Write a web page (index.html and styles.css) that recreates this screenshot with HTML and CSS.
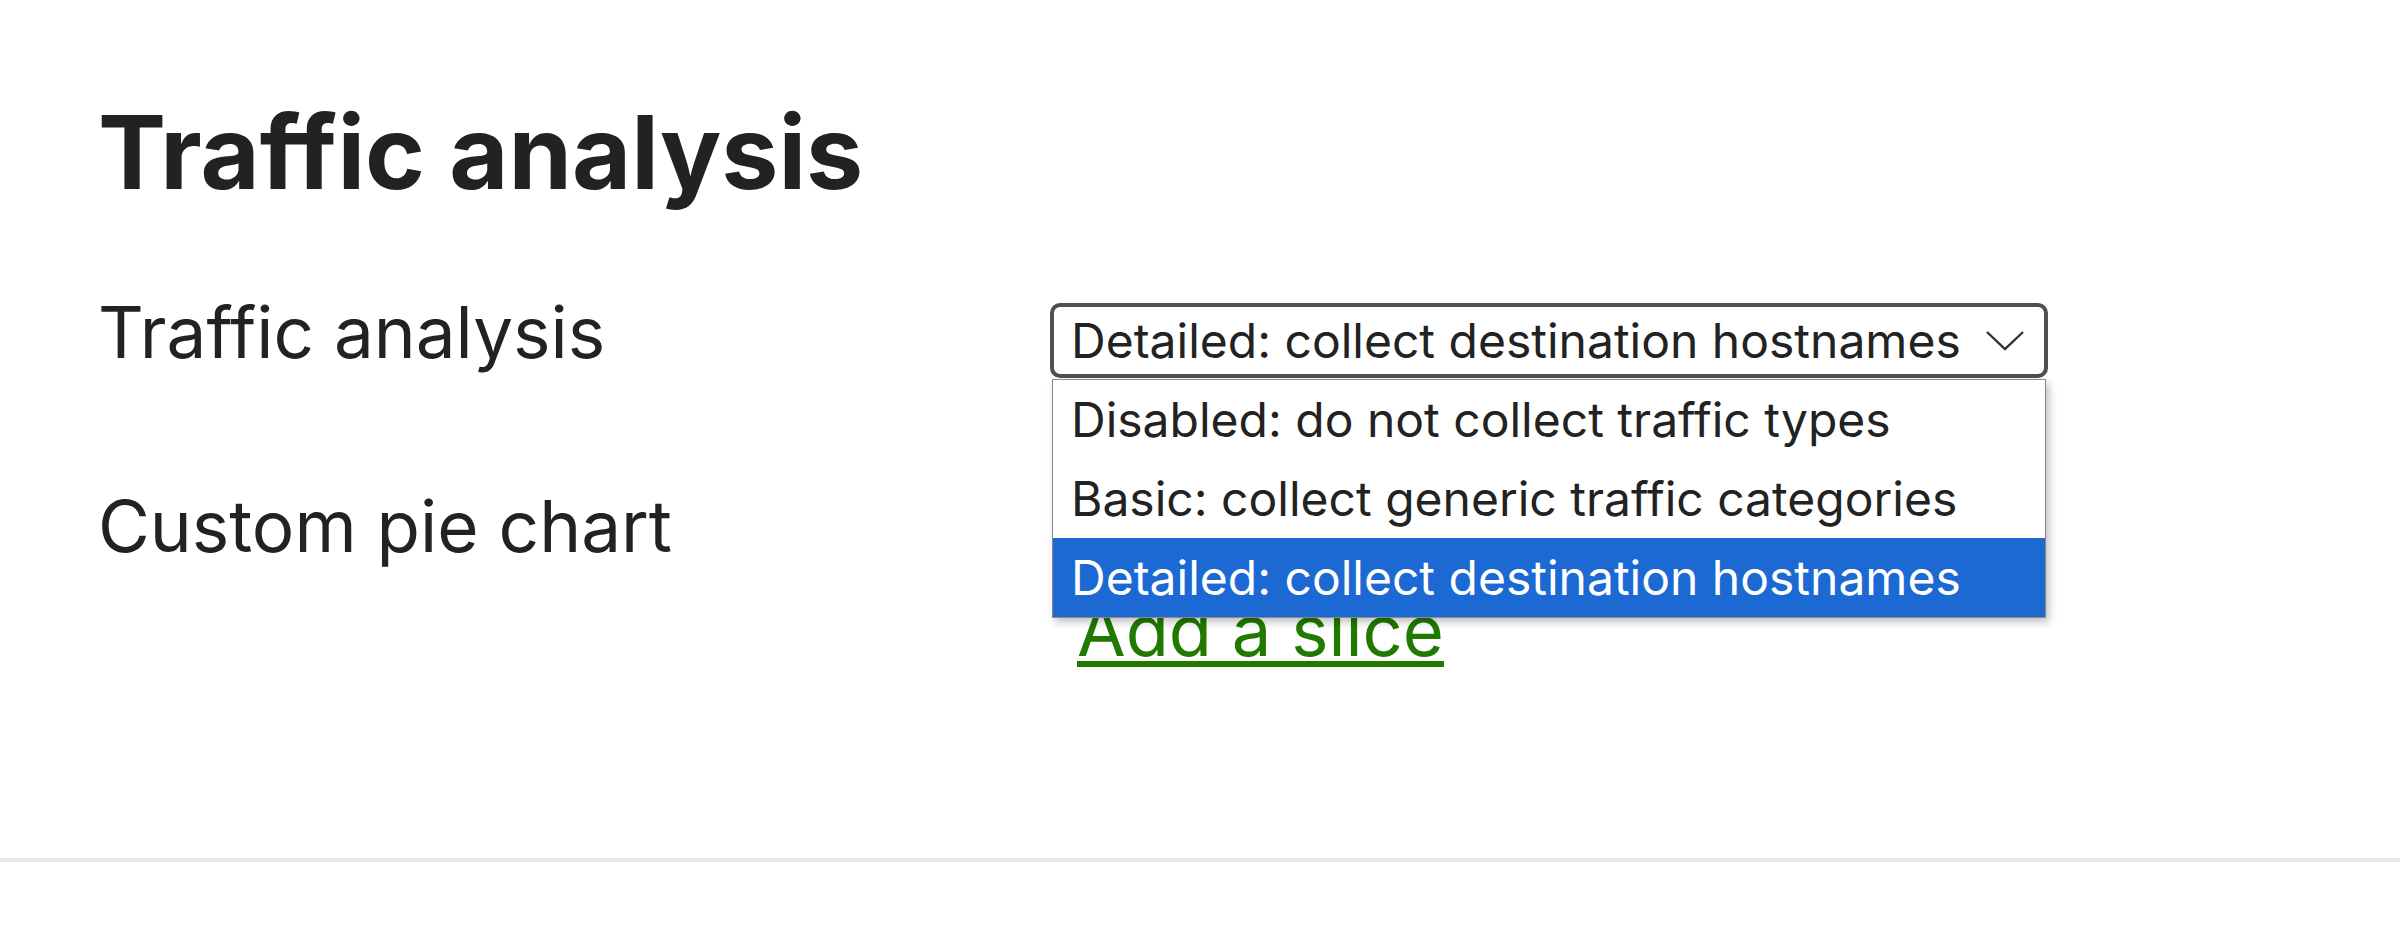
FILE: index.html
```html
<!DOCTYPE html>
<html lang="en">
<head>
  <meta charset="UTF-8">
  <meta name="viewport" content="width=device-width, initial-scale=1.0">
  <title>Traffic analysis</title>
  <link rel="stylesheet" href="styles.css">
</head>
<body>
  <div class="page">
    <h1 class="page-title">Traffic analysis</h1>

    <div class="settings">
      <div class="setting-label">Traffic analysis</div>
      <div class="setting-control">
        <div class="select-wrap">
          <div class="select-box">
            <span class="select-value">Detailed: collect destination hostnames</span>
            <svg class="select-arrow" width="38" height="20" viewBox="0 0 38 20">
              <path d="M1 1 L19 18 L37 1" fill="none" stroke="#333" stroke-width="2.4"/>
            </svg>
          </div>
          <!-- открытый список -->
          <ul class="select-list">
            <li class="select-option">Disabled: do not collect traffic types</li>
            <li class="select-option">Basic: collect generic traffic categories</li>
            <li class="select-option selected">Detailed: collect destination hostnames</li>
          </ul>
        </div>
      </div>

      <div class="setting-label">Custom pie chart</div>
      <div class="setting-control pie-control">
        <a href="#" class="add-link">Add a slice</a>
      </div>
    </div>
  </div>
  <hr class="page-divider">
</body>
</html>
```

FILE: styles.css
```css
body {
  margin: 0;
  font-family: Inter, "Noto Sans", sans-serif;
  color: #222;
  background-color: #fff;
}

.page {
  padding: 91px 98px 0;
}

.page-title {
  margin: 0;
  font-size: 102px;
  font-weight: 700;
  line-height: 1.2;
}

.settings {
  display: grid;
  grid-template-columns: 952px 998px;
  row-gap: 105px;
  margin-top: 76px;
  align-items: baseline;
}

.setting-label {
  font-size: 71px;
}

.pie-control {
  align-self: start;
  padding-top: 105px;
  padding-left: 27px;
  font-size: 70.5px;
}

.select-wrap {
  position: relative;
}

.select-box {
  display: flex;
  align-items: center;
  justify-content: space-between;
  height: 75px;
  box-sizing: border-box;
  padding: 0 20px 0 17px;
  border: 4px solid #505050;
  border-radius: 10px;
  font-size: 48px;
}

.select-arrow {
  flex-shrink: 0;
}

.select-list {
  position: absolute;
  top: 76px;
  left: 2px;
  right: 2px;
  margin: 0;
  padding: 0;
  list-style: none;
  background: #fff;
  border: 1px solid #8a8a8a;
  box-shadow: 3px 4px 8px rgba(0, 0, 0, 0.25);
  z-index: 2;
}

.select-option {
  height: 79px;
  display: flex;
  align-items: center;
  padding-left: 18px;
  font-size: 48px;
}

.select-option.selected {
  background-color: #1c69d4;
  color: #fff;
}

.add-link {
  color: #217a00;
  text-decoration-thickness: 6px;
  text-underline-offset: 5px;
}

.page-divider {
  margin: 185px 0 0;
  border: none;
  border-top: 4px solid #e8e8e8;
}
```
